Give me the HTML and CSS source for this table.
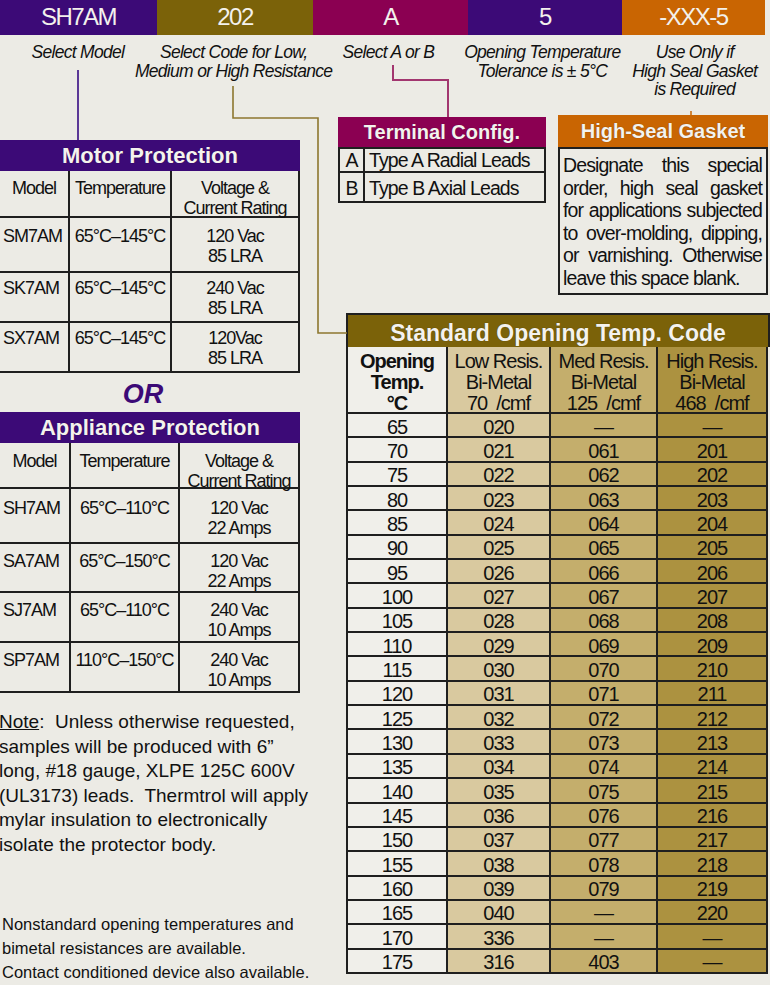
FILE: index.html
```html
<!DOCTYPE html>
<html>
<head>
<meta charset="utf-8">
<title>Thermal Protector Part Number Selection</title>
<link rel="stylesheet" href="styles.css">
</head>
<body>
<div class="page">
  <div class="codebar">
    <div class="seg seg-model">SH7AM</div>
    <div class="seg seg-code">202</div>
    <div class="seg seg-term">A</div>
    <div class="seg seg-tol">5</div>
    <div class="seg seg-seal">-XXX-5</div>
  </div>

  <div class="labels">
    <div class="lbl lbl-model"><span>Select Model</span></div>
    <div class="lbl lbl-code"><span>Select Code for Low,<br>Medium or High Resistance</span></div>
    <div class="lbl lbl-term"><span>Select A or B</span></div>
    <div class="lbl lbl-tol"><span>Opening Temperature<br>Tolerance is ± 5°C</span></div>
    <div class="lbl lbl-seal"><span>Use Only if<br>High Seal Gasket<br>is Required</span></div>
  </div>

  <div class="main">
    <div class="left">
      <div class="hdr hdr-purple">Motor Protection</div>
      <div class="ptable motor">
        <div class="cell th model">Model</div>
        <div class="cell th ctr">Temperature</div>
        <div class="cell th ctr">Voltage &amp;<br>Current Rating</div>

        <div class="cell r1 model">SM7AM</div>
        <div class="cell r1 ctr">65°C–145°C</div>
        <div class="cell r1 ctr">120 Vac<br>85 LRA</div>

        <div class="cell rn model">SK7AM</div>
        <div class="cell rn ctr">65°C–145°C</div>
        <div class="cell rn ctr">240 Vac<br>85 LRA</div>

        <div class="cell rn model">SX7AM</div>
        <div class="cell rn ctr">65°C–145°C</div>
        <div class="cell rn ctr">120Vac<br>85 LRA</div>
      </div>

      <div class="or">OR</div>

      <div class="hdr hdr-purple">Appliance Protection</div>
      <div class="ptable appliance">
        <div class="cell th model">Model</div>
        <div class="cell th ctr">Temperature</div>
        <div class="cell th ctr">Voltage &amp;<br>Current Rating</div>

        <div class="cell r1 model">SH7AM</div>
        <div class="cell r1 ctr">65°C–110°C</div>
        <div class="cell r1 ctr">120 Vac<br>22 Amps</div>

        <div class="cell rn model">SA7AM</div>
        <div class="cell rn ctr">65°C–150°C</div>
        <div class="cell rn ctr">120 Vac<br>22 Amps</div>

        <div class="cell rn model">SJ7AM</div>
        <div class="cell rn ctr">65°C–110°C</div>
        <div class="cell rn ctr">240 Vac<br>10 Amps</div>

        <div class="cell rn model">SP7AM</div>
        <div class="cell rn ctr">110°C–150°C</div>
        <div class="cell rn ctr">240 Vac<br>10 Amps</div>
      </div>

      <p class="note"><span class="u">Note</span>:&nbsp; Unless otherwise requested,<br>samples will be produced with 6”<br>long, #18 gauge, XLPE 125C 600V<br>(UL3173) leads.&nbsp; Thermtrol will apply<br>mylar insulation to electronically<br>isolate the protector body.</p>

      <p class="fine">Nonstandard opening temperatures and<br>bimetal resistances are available.<br>Contact conditioned device also available.</p>
    </div>

    <div class="right">
      <div class="toprow">
        <div class="term">
          <div class="hdr hdr-magenta">Terminal Config.</div>
          <div class="tgrid">
            <div class="tc ta key">A</div>
            <div class="tc ta">Type A Radial Leads</div>
            <div class="tc tb key">B</div>
            <div class="tc tb">Type B Axial Leads</div>
          </div>
        </div>
        <div class="seal">
          <div class="hdr hdr-orange">High-Seal Gasket</div>
          <p class="seal-body"><span class="jl">Designate this special</span><span class="jl">order, high seal gasket</span><span class="jl">for applications subjected</span><span class="jl">to over-molding, dipping,</span><span class="jl">or varnishing. Otherwise</span><span class="jl last">leave this space blank.</span></p>
        </div>
      </div>

      <div class="std">
        <div class="std-hdr">Standard Opening Temp. Code</div>
        <div class="sgrid">
          <div class="sc c0 sh bold">Opening<br>Temp.<br>°C</div>
          <div class="sc c1 sh">Low Resis.<br>Bi-Metal<br>70&nbsp; /cmf</div>
          <div class="sc c2 sh">Med Resis.<br>Bi-Metal<br>125&nbsp; /cmf</div>
          <div class="sc c3 sh">High Resis.<br>Bi-Metal<br>468&nbsp; /cmf</div>

          <div class="sc c0">65</div><div class="sc c1">020</div><div class="sc c2">—</div><div class="sc c3">—</div>
          <div class="sc c0">70</div><div class="sc c1">021</div><div class="sc c2">061</div><div class="sc c3">201</div>
          <div class="sc c0">75</div><div class="sc c1">022</div><div class="sc c2">062</div><div class="sc c3">202</div>
          <div class="sc c0">80</div><div class="sc c1">023</div><div class="sc c2">063</div><div class="sc c3">203</div>
          <div class="sc c0">85</div><div class="sc c1">024</div><div class="sc c2">064</div><div class="sc c3">204</div>
          <div class="sc c0">90</div><div class="sc c1">025</div><div class="sc c2">065</div><div class="sc c3">205</div>
          <div class="sc c0">95</div><div class="sc c1">026</div><div class="sc c2">066</div><div class="sc c3">206</div>
          <div class="sc c0">100</div><div class="sc c1">027</div><div class="sc c2">067</div><div class="sc c3">207</div>
          <div class="sc c0">105</div><div class="sc c1">028</div><div class="sc c2">068</div><div class="sc c3">208</div>
          <div class="sc c0">110</div><div class="sc c1">029</div><div class="sc c2">069</div><div class="sc c3">209</div>
          <div class="sc c0">115</div><div class="sc c1">030</div><div class="sc c2">070</div><div class="sc c3">210</div>
          <div class="sc c0">120</div><div class="sc c1">031</div><div class="sc c2">071</div><div class="sc c3">211</div>
          <div class="sc c0">125</div><div class="sc c1">032</div><div class="sc c2">072</div><div class="sc c3">212</div>
          <div class="sc c0">130</div><div class="sc c1">033</div><div class="sc c2">073</div><div class="sc c3">213</div>
          <div class="sc c0">135</div><div class="sc c1">034</div><div class="sc c2">074</div><div class="sc c3">214</div>
          <div class="sc c0">140</div><div class="sc c1">035</div><div class="sc c2">075</div><div class="sc c3">215</div>
          <div class="sc c0">145</div><div class="sc c1">036</div><div class="sc c2">076</div><div class="sc c3">216</div>
          <div class="sc c0">150</div><div class="sc c1">037</div><div class="sc c2">077</div><div class="sc c3">217</div>
          <div class="sc c0">155</div><div class="sc c1">038</div><div class="sc c2">078</div><div class="sc c3">218</div>
          <div class="sc c0">160</div><div class="sc c1">039</div><div class="sc c2">079</div><div class="sc c3">219</div>
          <div class="sc c0">165</div><div class="sc c1">040</div><div class="sc c2">—</div><div class="sc c3">220</div>
          <div class="sc c0">170</div><div class="sc c1">336</div><div class="sc c2">—</div><div class="sc c3">—</div>
          <div class="sc c0">175</div><div class="sc c1">316</div><div class="sc c2">403</div><div class="sc c3">—</div>
        </div>
      </div>
    </div>
  </div>

  <svg class="connectors" width="770" height="985" viewBox="0 0 770 985" aria-hidden="true">
    <path d="M78 70 V140" stroke="#5b3896" stroke-width="2" fill="none"/>
    <path d="M233 86 V118 H318 V333 H347" stroke="#8d772f" stroke-width="1.6" fill="none"/>
    <path d="M393 65 V80 H448 V117" stroke="#a2366f" stroke-width="2" fill="none"/>
    <path d="M691 111 V115" stroke="#c96502" stroke-width="1.5" fill="none"/>
  </svg>
</div>
</body>
</html>
```

FILE: styles.css
```css
:root {
  --sans: "Liberation Sans", Arial, sans-serif;
  --bg: #ecebe5;
  --line: #1f1f1f;
  --purple: #3c0a77;
  --olive: #7b6209;
  --magenta: #8b0052;
  --orange: #c96502;
}

html, body {
  margin: 0;
  padding: 0;
  background: var(--bg);
}

body {
  font-family: var(--sans);
  color: #111;
}

.page {
  position: relative;
  width: 770px;
  height: 985px;
  overflow: hidden;
  background: var(--bg);
}

/* ---------- code bar ---------- */
.codebar {
  display: flex;
  height: 35px;
}
.seg {
  color: #f3f1ec;
  font-size: 24px;
  letter-spacing: -1.5px;
  line-height: 33px;
  text-align: center;
}
.seg-model { width: 157px; background: var(--purple); }
.seg-code  { width: 156px; background: var(--olive); }
.seg-term  { width: 155px; background: var(--magenta); }
.seg-tol   { width: 154px; background: var(--purple); }
.seg-seal  { width: 143px; background: var(--orange); }

/* ---------- labels ---------- */
.labels {
  display: flex;
  height: 65px;
}
.lbl {
  display: flex;
  justify-content: center;
  font-style: italic;
  font-size: 17.5px;
  letter-spacing: -0.7px;
  line-height: 18.7px;
  padding-top: 8px;
  box-sizing: border-box;
  color: #111;
}
.lbl span {
  white-space: nowrap;
  text-align: center;
}
.lbl-model { width: 157px; }
.lbl-code  { width: 156px; }
.lbl-term  { width: 155px; }
.lbl-tol   { width: 154px; }
.lbl-seal  { width: 152px; }

/* ---------- main layout ---------- */
.main {
  display: flex;
  align-items: flex-start;
}
.left {
  width: 300px;
  margin-top: 40px;
}
.right {
  margin-left: 38px;
  margin-top: 15px;
  width: 430px;
}

/* ---------- headers ---------- */
.hdr {
  font-weight: bold;
  color: #f4f2ee;
  text-align: center;
  text-shadow: 0 0 1px rgba(0, 0, 0, 0.45);
  white-space: nowrap;
}
.hdr-purple {
  background: var(--purple);
  height: 31px;
  line-height: 31px;
  font-size: 22px;
}
.hdr-magenta {
  background: var(--magenta);
  height: 30px;
  line-height: 30px;
  font-size: 20px;
}
.hdr-orange {
  background: var(--orange);
  height: 32px;
  line-height: 32px;
  font-size: 20px;
}

/* ---------- protection tables ---------- */
.ptable {
  display: grid;
}
.motor {
  grid-template-columns: 70px 102px 128px;
  grid-template-rows: 47px 55px 50px 50px;
}
.appliance {
  grid-template-columns: 71px 109px 120px;
  grid-template-rows: 46px 55px 49px 50px 50px;
}
.cell {
  box-sizing: border-box;
  border-right: 2px solid var(--line);
  border-bottom: 2px solid var(--line);
  font-size: 18px;
  letter-spacing: -1px;
  line-height: 20px;
  white-space: nowrap;
}
.cell.model { padding-left: 3px; }
.cell.ctr { text-align: center; }
.cell.th.model { padding-left: 0; text-align: center; }
.motor .th { padding-top: 7px; }
.motor .r1 { padding-top: 8px; }
.motor .rn { padding-top: 5px; }
.appliance .th { padding-top: 8px; }
.appliance .r1 { padding-top: 9px; }
.appliance .rn { padding-top: 7px; }

.or {
  font-weight: bold;
  font-style: italic;
  font-size: 27px;
  color: var(--purple);
  text-align: center;
  height: 39px;
  box-sizing: border-box;
  padding-top: 4px;
  line-height: 35px;
  padding-right: 14px;
}

.note {
  margin: 17px 0 0 -1px;
  font-size: 19px;
  line-height: 24.5px;
  white-space: nowrap;
}
.note .u { text-decoration: underline; }

.fine {
  margin: 56px 0 0 2px;
  font-size: 16.5px;
  line-height: 23.8px;
  white-space: nowrap;
}

/* ---------- terminal config ---------- */
.toprow {
  display: flex;
  align-items: flex-start;
  gap: 12px;
}
.term {
  width: 208px;
  margin-top: 2px;
}
.tgrid {
  display: grid;
  grid-template-columns: 25px 181px;
  grid-template-rows: 24px 30px;
  border-left: 2px solid var(--line);
  border-top: 2px solid var(--line);
}
.tc {
  box-sizing: border-box;
  border-right: 2px solid var(--line);
  border-bottom: 2px solid var(--line);
  font-size: 19.5px;
  letter-spacing: -0.9px;
  line-height: 22px;
  padding-left: 4px;
  white-space: nowrap;
}
.tc.key { text-align: center; padding-left: 0; }
.tc.ta { padding-top: 0; }
.tc.tb { padding-top: 4px; }

/* ---------- high-seal gasket ---------- */
.seal {
  width: 210px;
}
.seal-body {
  margin: 0;
  height: 148px;
  box-sizing: border-box;
  border: 2px solid var(--line);
  padding: 5px 4px 0 3px;
  font-size: 19.5px;
  letter-spacing: -0.9px;
  line-height: 22.5px;
}
.jl {
  display: block;
  white-space: nowrap;
  text-align: justify;
  text-align-last: justify;
}
.jl.last {
  text-align-last: left;
}

/* ---------- standard opening temp table ---------- */
.std {
  margin-top: 18px;
  margin-left: 8px;
  width: 422px;
  border-left: 2px solid var(--line);
  border-top: 2px solid var(--line);
}
.std-hdr {
  background: var(--olive);
  height: 32px;
  box-sizing: border-box;
  border-right: 2px solid var(--line);
  padding-top: 5px;
  line-height: 27px;
  font-weight: bold;
  font-size: 23px;
  color: #f4f2ee;
  text-align: center;
  text-shadow: 0 0 1px rgba(0, 0, 0, 0.45);
  white-space: nowrap;
}
.sgrid {
  display: grid;
  grid-template-columns: 100px 103px 107px 110px;
  grid-template-rows: 67px repeat(23, 24.35px);
}
.sc {
  box-sizing: border-box;
  border-right: 2px solid var(--line);
  border-bottom: 2px solid var(--line);
  text-align: center;
  font-size: 20px;
  letter-spacing: -1px;
  line-height: 18px;
  padding-top: 3.5px;
  white-space: nowrap;
}
.sc.sh {
  line-height: 21px;
  padding-top: 4px;
}
.sc.bold { font-weight: bold; }
.c0 { background: #f0efea; }
.c1 { background: #d9c99f; }
.c2 { background: #c4ae6c; }
.c3 { background: #ac9240; }

/* ---------- connector lines (diagram overlay) ---------- */
.connectors {
  position: absolute;
  left: 0;
  top: 0;
  pointer-events: none;
}
```
